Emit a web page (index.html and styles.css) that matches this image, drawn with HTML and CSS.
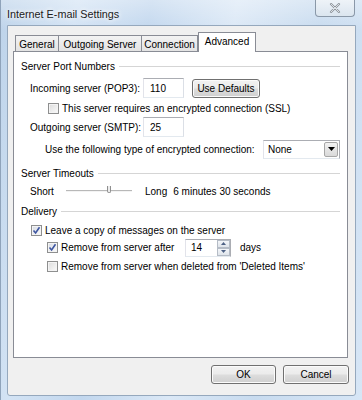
FILE: index.html
```html
<!DOCTYPE html>
<html>
<head>
<meta charset="utf-8">
<link rel="stylesheet" href="styles.css">
</head>
<body>
<div class="window">
  <div class="titlebar">
    <span class="title">Internet E-mail Settings</span>
    <div class="close">
      <svg width="12" height="10" viewBox="0 0 12 10"><path d="M2 1 L10 9 M10 1 L2 9" stroke="#8d949c" stroke-width="2.2" stroke-linecap="round" fill="none"/><path d="M2 1 L10 9 M10 1 L2 9" stroke="#f4f6f8" stroke-width="0.8" stroke-linecap="round" fill="none"/></svg>
    </div>
  </div>
  <div class="client">
    <div class="tabs">
      <div class="tab t-general">General</div>
      <div class="tab t-outgoing">Outgoing Server</div>
      <div class="tab t-connection">Connection</div>
      <div class="tab t-advanced active">Advanced</div>
    </div>
    <div class="panel">
      <div class="group-head"><span>Server Port Numbers</span><i class="rule"></i></div>

      <div class="row r-incoming">
        <span class="lbl w-port">Incoming server (POP3):</span>
        <span class="field port">110</span>
        <button class="btn defaults">Use Defaults</button>
      </div>

      <div class="row r-ssl">
        <span class="cb"></span>
        <span>This server requires an encrypted connection (SSL)</span>
      </div>

      <div class="row r-outgoing">
        <span class="lbl w-port">Outgoing server (SMTP):</span>
        <span class="field port">25</span>
      </div>

      <div class="row r-enc">
        <span class="lbl w-enc">Use the following type of encrypted connection:</span>
        <span class="combo"><span class="combo-text">None</span><span class="combo-btn"><svg width="7" height="4" viewBox="0 0 7 4"><path d="M0 0 H7 L3.5 4 Z" fill="#000"/></svg></span></span>
      </div>

      <div class="group-head g2"><span>Server Timeouts</span><i class="rule"></i></div>

      <div class="row r-slider">
        <span class="lbl w-short">Short</span>
        <span class="slider"><i class="track"></i><i class="thumb"></i></span>
        <span class="long">Long</span>
        <span class="dur">6 minutes 30 seconds</span>
      </div>

      <div class="group-head g3"><span>Delivery</span><i class="rule"></i></div>

      <div class="row r-leave">
        <span class="cb checked"><svg width="9" height="9" viewBox="0 0 9 9"><path d="M1.5 4.5 L3.6 7 L7.5 1.2" stroke="#3e56a0" stroke-width="1.6" fill="none"/></svg></span>
        <span>Leave a copy of messages on the server</span>
      </div>

      <div class="row r-after">
        <span class="cb checked"><svg width="9" height="9" viewBox="0 0 9 9"><path d="M1.5 4.5 L3.6 7 L7.5 1.2" stroke="#3e56a0" stroke-width="1.6" fill="none"/></svg></span>
        <span class="lbl w-after">Remove from server after</span>
        <span class="spin"><span class="spin-text">14</span><span class="spin-btns"><span class="sb"><svg width="5" height="3" viewBox="0 0 5 3"><path d="M0 3 H5 L2.5 0 Z" fill="#4d6185"/></svg></span><span class="sb"><svg width="5" height="3" viewBox="0 0 5 3"><path d="M0 0 H5 L2.5 3 Z" fill="#4d6185"/></svg></span></span></span>
        <span class="days">days</span>
      </div>

      <div class="row r-deleted">
        <span class="cb"></span>
        <span>Remove from server when deleted from 'Deleted Items'</span>
      </div>
    </div>
    <div class="buttons">
      <button class="btn ok">OK</button>
      <button class="btn cancel">Cancel</button>
    </div>
  </div>
</div>
</body>
</html>
```

FILE: styles.css
```css
html, body {
  margin: 0;
  padding: 0;
  width: 362px;
  height: 400px;
  overflow: hidden;
}

.window {
  width: 362px;
  height: 400px;
  box-sizing: border-box;
  display: flex;
  flex-direction: column;
  background:
    linear-gradient(to bottom, rgba(255,255,255,0.35), rgba(255,255,255,0) 30px),
    linear-gradient(100deg, #bdd3ea 0%, #d3e3f4 18%, #c2d7ee 35%, #dbe8f6 55%, #c8dbef 75%, #d7e6f6 100%);
  border-left: 1px solid #8fa3ba;
  font-family: "Liberation Sans", Arial, sans-serif;
  font-size: 10px;
  color: #000;
}

.titlebar {
  height: 25px;
  display: flex;
  justify-content: space-between;
  align-items: flex-start;
  flex: none;
}

.title {
  margin-left: 6px;
  margin-top: 8px;
  font-size: 10.8px;
  color: #1b1b1b;
  text-shadow: 0 0 6px #fff, 0 0 4px #fff;
}

.close {
  width: 40px;
  height: 17px;
  margin-right: 7px;
  box-sizing: border-box;
  border: 1px solid #8a98a8;
  border-top: none;
  border-radius: 0 0 4px 4px;
  background: linear-gradient(#eef3f8, #dbe5ef);
  display: flex;
  align-items: center;
  justify-content: center;
}

.client {
  flex: 1;
  margin: 0 6px 4px 6px;
  background: #f0f0f0;
  border: 1px solid #95a8bd;
  border-radius: 0 0 3px 3px;
  padding: 6px 6px 0 5px;
  display: flex;
  flex-direction: column;
}

.tabs {
  display: flex;
  align-items: flex-end;
  height: 19px;
  padding-left: 2px;
  position: relative;
  z-index: 1;
}

.tab {
  height: 16px;
  box-sizing: border-box;
  border: 1px solid #898c95;
  border-bottom: none;
  border-right: none;
  background: linear-gradient(#f3f3f3, #e3e3e3);
  display: flex;
  align-items: center;
  justify-content: center;
  padding-top: 1px;
}

.t-general { width: 43px; }
.t-outgoing { width: 83px; }
.t-connection { width: 57px; border-right: 1px solid #898c95; }
.t-advanced { width: 58px; }

.tab.active {
  height: 20px;
  background: #fff;
  border: 1px solid #898c95;
  border-bottom: none;
  margin-bottom: -1px;
  align-items: flex-start;
  padding-top: 3px;
}

.panel {
  width: 335px;
  height: 307px;
  box-sizing: border-box;
  border: 1px solid #898c95;
  background: #fff;
  padding: 6px 7px 0 7px;
  display: flex;
  flex-direction: column;
}

.group-head {
  height: 16px;
  display: flex;
  align-items: center;
  gap: 4px;
}

.rule {
  flex: 1;
  height: 1px;
  background: #d5d5d5;
  margin-top: 1px;
}

.g2 { margin-top: 6px; }
.g3 { margin-top: 4px; }

.row {
  display: flex;
  align-items: center;
}

.r-incoming { height: 20px; margin-top: 4px; padding-left: 9px; }
.r-ssl { height: 16px; margin-top: 2px; padding-left: 27px; }
.r-outgoing { height: 20px; margin-top: 1px; padding-left: 9px; }
.r-enc { height: 20px; margin-top: 2px; padding-left: 24px; }
.r-slider { height: 16px; margin-top: 2px; padding-left: 9px; }
.r-leave { height: 16px; margin-top: 3px; padding-left: 10px; }
.r-after { height: 19px; margin-top: 0; padding-left: 26px; }
.r-deleted { height: 16px; margin-top: 1px; padding-left: 26px; }

.lbl { flex: none; }
.w-port { width: 113px; }
.w-enc { width: 218px; }
.w-short { width: 36px; }
.w-after { width: 124px; }

.field {
  box-sizing: border-box;
  height: 20px;
  border: 1px solid #abadb3;
  border-left-color: #e2e3ea;
  border-right-color: #dbdfe6;
  border-bottom-color: #e3e9ef;
  background: #fff;
  display: flex;
  align-items: center;
  padding-left: 6px;
}

.port { width: 41px; }

.btn {
  font-family: "Liberation Sans", Arial, sans-serif;
  font-size: 10px;
  color: #000;
  box-sizing: border-box;
  border: 1px solid #707070;
  border-radius: 3px;
  background: linear-gradient(#f2f2f2 0%, #ebebeb 48%, #dddddd 52%, #cfcfcf 100%);
  box-shadow: inset 0 0 0 1px #fbfbfb;
  padding: 0;
  margin: 0;
}

.defaults {
  width: 68px;
  height: 19px;
  margin-left: 8px;
}

.cb {
  width: 11px;
  height: 11px;
  box-sizing: border-box;
  border: 1px solid #8e8f8f;
  background: linear-gradient(135deg, #dcdcdc, #fbfbfb);
  box-shadow: inset 0 0 0 1px #f4f4f4;
  margin-right: 3px;
  flex: none;
  display: flex;
  align-items: center;
  justify-content: center;
}

.cb.checked {
  background: linear-gradient(135deg, #d6dbe4, #fbfbfb);
}

.combo {
  width: 77px;
  height: 19px;
  box-sizing: border-box;
  border: 1px solid #abadb3;
  border-left-color: #e2e3ea;
  border-bottom-color: #e3e9ef;
  background: #fff;
  display: flex;
  align-items: center;
  padding: 1px;
}

.combo-text {
  flex: 1;
  padding-left: 3px;
}

.combo-btn {
  width: 14px;
  height: 15px;
  box-sizing: border-box;
  border: 1px solid #a7a7a7;
  border-radius: 2px;
  background: linear-gradient(#f2f2f2, #d9d9d9);
  display: flex;
  align-items: center;
  justify-content: center;
}

.slider {
  width: 66px;
  height: 16px;
  position: relative;
  flex: none;
}

.track {
  position: absolute;
  left: 0;
  right: 0;
  top: 7px;
  height: 1px;
  background: #b8b8b8;
  border-bottom: 1px solid #f3f3f3;
}

.thumb {
  position: absolute;
  left: 41px;
  top: 3px;
  width: 4px;
  height: 7px;
  box-sizing: border-box;
  border: 1px solid #8f8f8f;
  border-top: none;
  border-radius: 0 0 2px 2px;
  background: #ededed;
}

.long { margin-left: 13px; }
.dur { margin-left: 6px; }

.spin {
  width: 46px;
  height: 18px;
  box-sizing: border-box;
  border: 1px solid #abadb3;
  border-left-color: #e2e3ea;
  border-bottom-color: #e3e9ef;
  background: #fff;
  display: flex;
  align-items: stretch;
}

.spin-text {
  flex: 1;
  display: flex;
  align-items: center;
  padding-left: 5px;
}

.spin-btns {
  width: 13px;
  display: flex;
  flex-direction: column;
}

.sb {
  flex: 1;
  box-sizing: border-box;
  border: 1px solid #b5bcc6;
  background: linear-gradient(#f4f6f9, #dfe4ea);
  display: flex;
  align-items: center;
  justify-content: center;
}

.days { margin-left: 9px; }

.buttons {
  display: flex;
  justify-content: flex-end;
  gap: 7px;
  margin-top: 7px;
}

.ok { width: 65px; height: 19px; }
.cancel { width: 66px; height: 19px; }
```
